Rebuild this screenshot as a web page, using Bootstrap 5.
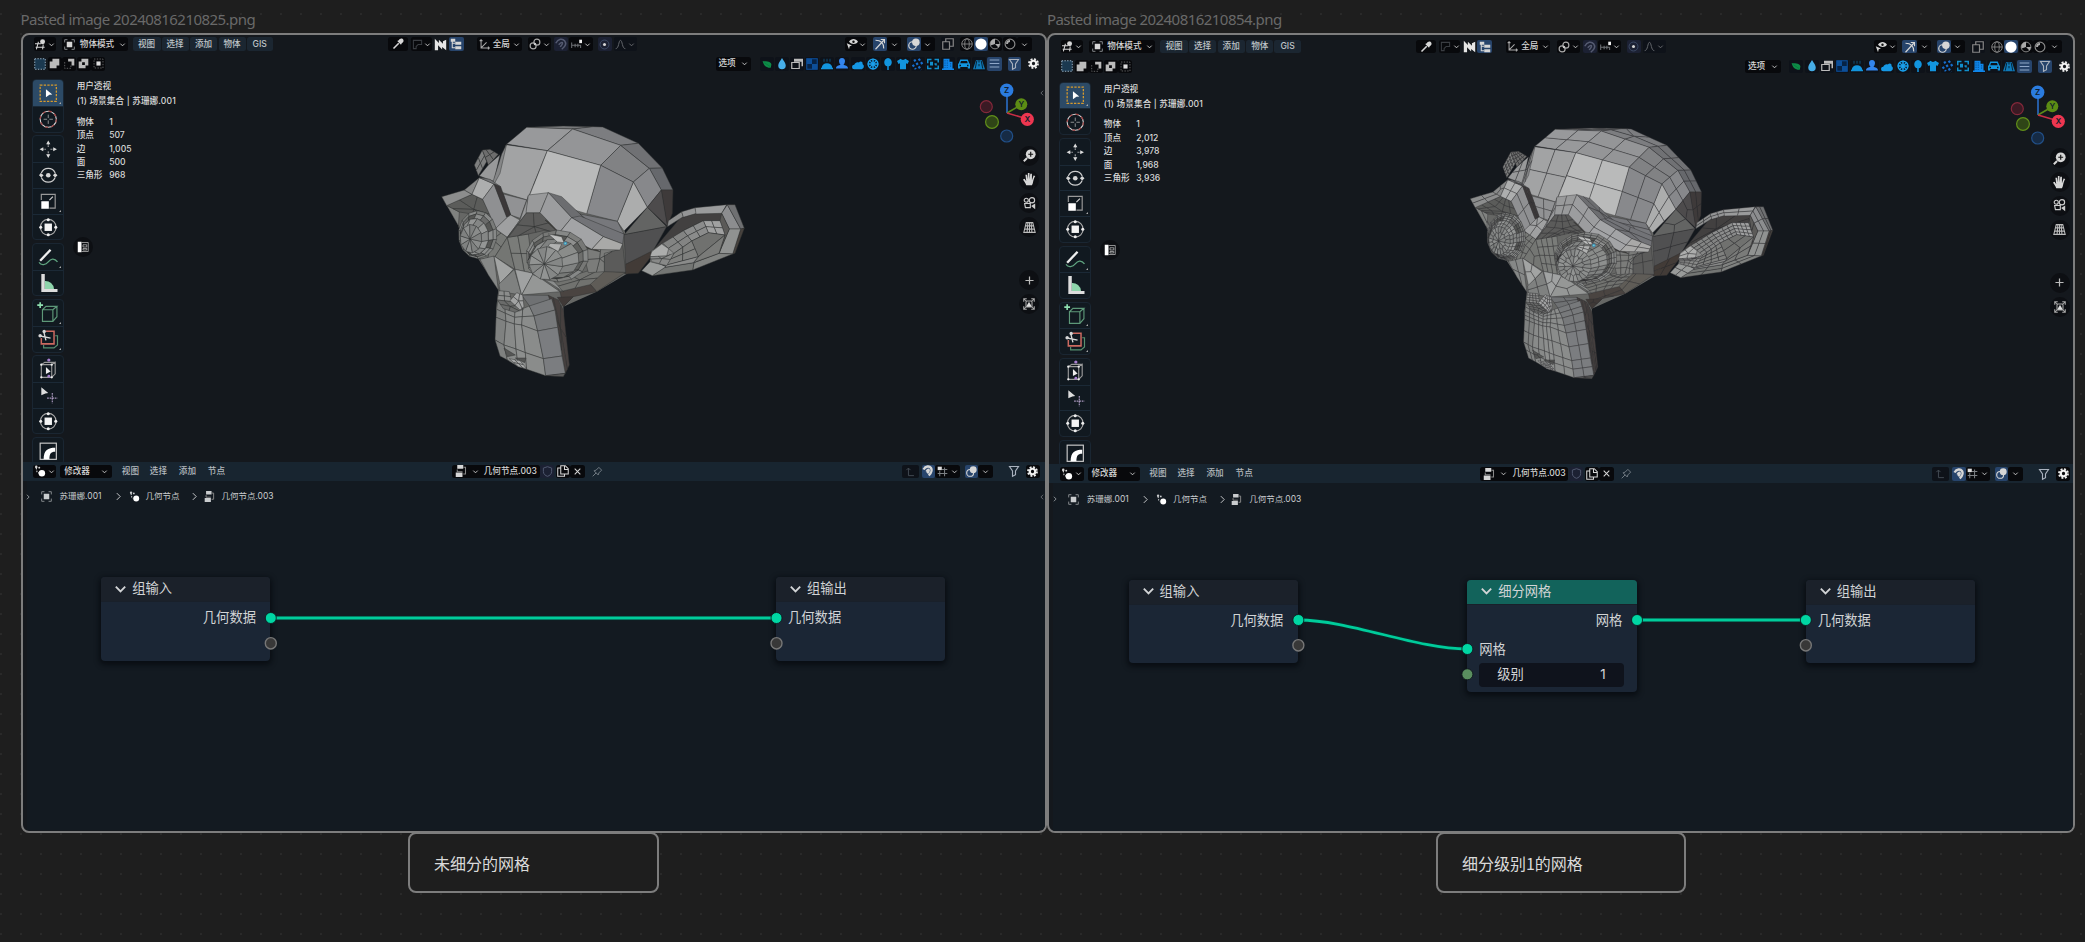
<!DOCTYPE html>
<html lang="en">
<head>
<meta charset="utf-8">
<title>Canvas</title>
<link href="https://cdn.jsdelivr.net/npm/bootstrap@5.3.0/dist/css/bootstrap.min.css" rel="stylesheet">
<style>
html,body{height:100%;overflow:hidden}
body{background-color:#1e1e1e;font-family:Inter,"Noto Sans CJK SC",sans-serif;color:#d6d6d6;
 background-image:radial-gradient(circle,#2a2a2a 0,#292929 1px,transparent 1.4px);background-size:20px 20px;background-position:-9px 4px}
.board{padding:10px 0 0 20.5px;gap:.4px}
.fname{font:15px/18px "Noto Sans",sans-serif;color:#696969;height:23px;white-space:nowrap;letter-spacing:-.54px}
.shot{border:2px solid #7d7d7d;border-radius:8px;height:800px;background:#14181d;overflow:hidden;position:relative}
.note{border:2px solid #7d7d7d;border-radius:8px;width:250.5px;height:61px;margin-top:-1px;padding:0 24.5px 0 24px;background:#1e1e1e;font:16px/1 "Noto Sans CJK SC",sans-serif;color:#dadada}
.ln{fill:none}
.ln:not([stroke]){stroke:currentColor}
.bar{height:18px;white-space:nowrap;font-size:8.6px;font-weight:500;line-height:13px}
.bar2{height:21.5px}
.seg{height:13.5px;display:flex;align-items:center;justify-content:space-around;flex:none;overflow:visible}
.k{background:#08090c;border-radius:2.5px}
.m{background:#1b2631;border-radius:2.5px;color:#bfc4c8}
.b{background:#27446b;border-radius:2px}
.p{background:#1c2133;border-radius:2px}
.d{background:#0e1219;border-radius:2px}
.tx{color:#b4babe}
.seg svg,.cell svg,.rnd svg{display:block;flex:none}
.view{height:387.2px;position:relative}
.tools{width:31.7px;margin-top:4.8px;gap:2.8px}
.grp{border:1px solid #1a2632;border-radius:4px;background:#111920;overflow:hidden;flex:none}
.cell{height:25.7px;display:flex;align-items:center;justify-content:center;position:relative}
.cell+.cell{border-top:1px solid #1b2936}
.cell.on{background:#2c4a66}
.cell.sub::after{content:"";position:absolute;right:2px;bottom:2px;border:1.5px solid #aaa;border-left-color:transparent;border-top-color:transparent}
.stats{font-size:8.6px;font-weight:500;line-height:13.35px;color:#dadada;margin:5.5px 0 0 12.7px;white-space:nowrap}
.stats .scene{margin:1.8px 0 7.5px;letter-spacing:.12px}
.stats .lab{width:32.5px;display:inline-block}
.rnd{width:20px;height:20px;border-radius:50%;background:#0d0f13;display:flex;align-items:center;justify-content:center;position:absolute}
.over{position:absolute}
.tab{right:0;color:#6b6f74}
.nbar{height:19.3px;background:#182530}
.crumb{height:32px;font-weight:400;color:#c9ccce;font-size:8.5px}
.ned{background:#131a21}
.free{position:relative;height:317px}
.gnode{position:absolute;border-radius:4px;background:#1b2635;box-shadow:0 2px 5px 2px rgba(5,8,12,.65);font-size:13.3px;color:#d2d4d6;white-space:nowrap}
.gnode .hd{height:24.8px;background:#1b212a;border-radius:4px 4px 0 0;padding:0 0 2px 12px;gap:4px;line-height:22px;border-bottom:1px solid #19202a}
.gnode .hd.geo{background:#12635b}
.gnode .rw{height:29.6px;line-height:30px;padding:0 14.5px 0 12px}
.fld{margin:-.5px 13px 0 12px;height:23.5px;background:#0f131c;border-radius:4px;line-height:22px;padding:0 18px}
</style>
<script src="https://cdn.jsdelivr.net/npm/bootstrap@5.3.0/dist/js/bootstrap.bundle.min.js"></script>
</head>
<body>
<main class="board d-flex align-items-start" id="board"></main>
<script>
// 16x16 icon drawings
const S='class="ln"';
const I={
chev:`<path ${S} stroke-width="2" d="M3 6l5 5 5-5"/>`,
right:`<path ${S} stroke-width="1.7" d="M5 2l6 6-6 6"/>`,
left:`<path ${S} stroke-width="2.4" d="M11 2L5 8l6 6"/>`,
ed3d:`<path ${S} stroke-width="1.5" d="M0 7h9M1 12h13M5 4L2 15M12 8l-1 7"/><circle cx="11" cy="4" r="3.6" fill="currentColor"/>`,
obj:`<rect x="4" y="4" width="8" height="8" fill="currentColor"/><path ${S} stroke="#8f9295" stroke-width="1.3" d="M1 5V1h4M11 1h4v4M15 11v4h-4M5 15H1v-4"/>`,
drop:`<path ${S} stroke-width="2.2" d="M2 14l7-7"/><path fill="currentColor" d="M7 4l5 5 1-2c3-1 3-5 1-6s-4 0-5 2z"/>`,
sq:`<path ${S} stroke="#3a3d42" stroke-width="1.5" d="M14 2H2v12h4v-3l3-3h5z"/>`,
nn:`<path fill="#e6e6e6" d="M1 1l5 5V2l5 5V4l4-2v13l-5-4v3L5 9v6H1z"/>`,
tree:`<path ${S} stroke-width="1.4" d="M3 4v9h4M3 7h4"/><path fill="currentColor" d="M1 1h6v4H1zM7 5h8v4H7zM7 11h8v4H7z"/>`,
axes:`<path ${S} stroke="#aaa" stroke-width="1.5" d="M3 1v12h12M3 13l8-8M1 3l2-2 2 2M13 11l2 2-2 2"/>`,
link:`<circle cx="5.5" cy="10.5" r="4" ${S} stroke="#aaa" stroke-width="1.6"/><circle cx="10.5" cy="5.5" r="4" ${S} stroke="#aaa" stroke-width="1.6"/><circle cx="8" cy="8" r="1.3" fill="currentColor"/>`,
mag:`<path ${S} stroke-width="3.2" d="M2 6c3-5 8-5 10-2s1 6-3 10M6 9c2-3 3-3 3-2s0 2-2 4"/>`,
magd:`<path ${S} stroke="#545a70" stroke-width="2" d="M1 7c3-6 9-7 12-3s0 8-4 11M5 9c2-3 5-4 5-2s-2 3-3 5"/>`,
incr:`<path ${S} stroke="#6f7276" stroke-width="1.5" d="M1 5v8M1 9h13M6 7v5M10 7v5M14 9v4"/><rect x="12" y="1" width="4" height="5" fill="#eee"/>`,
prop:`<circle cx="8" cy="8" r="6.5" ${S} stroke="#3c4a66" stroke-width="1.4"/><circle cx="8" cy="8" r="2.2" fill="currentColor"/>`,
curve:`<path ${S} stroke="#64676c" stroke-width="1.4" d="M1 14C6 14 5 2 8 2s2 12 7 12"/>`,
eye:`<path fill="currentColor" d="M4 5c3-5 9-5 12 0-3 4-8 4-12 0zM1 7l7 3-3 1-1 4z"/><circle cx="10" cy="5" r="1.6" fill="#111"/>`,
giz:`<path ${S} stroke-width="1.5" d="M2 3c7 0 11 4 11 11M2 15L13 3M9 2h5v5"/>`,
ovl:`<circle cx="6" cy="10" r="5" ${S} stroke-width="1.6"/><circle cx="10.5" cy="5.5" r="5" fill="currentColor"/>`,
xray:`<path ${S} stroke="#888" stroke-width="1.6" d="M1 5h9v10H1zM5 5V1h10v10h-5"/>`,
wire:`<g ${S} stroke="#888" stroke-width="1.2"><circle cx="8" cy="8" r="7"/><ellipse cx="8" cy="8" rx="3" ry="7"/><path d="M1 8h14"/></g>`,
ball:`<circle cx="8" cy="8" r="7.5" fill="#fff"/>`,
mat:`<circle cx="8" cy="8" r="6.5" ${S} stroke="#888" stroke-width="1.3"/><path fill="#aaa" d="M8 1a7 7 0 00-6 9l6-2zM8 8l5 5A7 7 0 0115 8z"/>`,
rend:`<circle cx="8" cy="8" r="6.5" ${S} stroke="#888" stroke-width="1.6"/><path ${S} stroke="#aaa" stroke-width="2.5" d="M4 8a4 4 0 014-4"/>`,
sel0:`<rect x="1" y="1" width="14" height="14" fill="#1b3950" stroke="#9ab4c8" stroke-width="1.3" stroke-dasharray="1.8 1.8"/>`,
sel1:`<path fill="#bbb" d="M5 1h10v10h-4v4H1V5h4z"/>`,
sel2:`<path fill="#bbb" d="M6 1h9v10h-4V5H6z"/><path ${S} stroke="#888" stroke-dasharray="2 2" d="M1 6v9h9v-4"/>`,
sel3:`<path fill="#bbb" fill-rule="evenodd" d="M5 1h10v10h-4v4H1V5h4zM6 6v4h4V6z"/>`,
sel4:`<rect x="1.5" y="1.5" width="13" height="13" ${S} stroke="#888" stroke-dasharray="2 2"/><rect x="5" y="5" width="6" height="6" fill="#ddd"/>`,
leaf:`<path fill="#0e8a48" d="M1 3c4 1 12-1 14 5 0 3-1 5-1 6-4 0-11-1-13-11z"/><path stroke="#073" d="M4 6l9 6"/>`,
water:`<path fill="#46aee8" d="M8 0c3 5 5 7 5 10a5 5 0 01-10 0c0-3 2-5 5-10z"/>`,
win:`<path fill="#bbb" d="M4 1h12v10h-2V5H4z"/><path ${S} stroke="#bbb" stroke-width="1.6" d="M1 6h10v8H1z"/>`,
chk:`<rect x="1" y="1" width="14" height="14" fill="#062346" stroke="#0c4f9c" stroke-width="1.4"/><path fill="#0d4f99" d="M1 1h7v7H1zM8 8h7v7H8z"/>`,
dome:`<path fill="#1294dd" d="M1 13a7 6 0 0114 0zM0 13h16v2H0z"/><path ${S} stroke="#0f4f78" stroke-width="1.3" d="M4 1v4M8 1v4M12 1v4"/>`,
man:`<path fill="#3385ee" d="M8 0c3 0 4 2 4 4s-1 4-2 5c2 1 6 1 6 5H0c0-4 4-4 6-5C5 8 4 6 4 4s1-4 4-4z"/>`,
cloud:`<path fill="#1597e4" d="M3 15a3 3 0 010-6c1-3 4-4 6-3 3-3 6 0 5 2 3 2 2 6-1 7z"/>`,
reel:`<circle cx="8" cy="8" r="6.6" fill="#0b2338" stroke="#1aa0ec" stroke-width="1.8"/><g fill="#1aa0ec"><circle cx="8" cy="8" r="1.6"/><path d="M7 1h2v14H7zM1 7h14v2H1zM3 4l1-1 9 9-1 1zM12 3l1 1-9 9-1-1z"/></g>`,
tree2:`<path fill="#1295df" d="M8 0a5.500 5.500 0 015 6c0 3-2 5-4 5v5H7v-5c-2 0-4-2-4-5a5.500 5.500 0 015-6z"/>`,
shirt:`<path fill="#1295df" d="M5 1c1 2 5 2 6 0l5 3-2 4-2-1v8H4V7L2 8 0 4z"/>`,
spray:`<path ${S} stroke="#166fd0" stroke-width="3" stroke-dasharray="3 2.5" d="M3 2l9 14M9 1l6 9M1 9l4 6"/>`,
cyc:`<path ${S} stroke="#118fcc" stroke-width="2" d="M1 7V2h5M10 2h5v4M15 10v4h-5M6 14H1v-4M5 6h2v3H5zM10 8h2v2"/>`,
bld:`<path fill="#0f86ea" d="M2 1h8v4h4v9h2v2H0v-2h2z"/><path stroke="#063a70" stroke-dasharray="1.500 1.500" d="M4 3v10M7 3v10M11.500 7v6"/>`,
car:`<path fill="#1295df" fill-rule="evenodd" d="M3 2h10l2 5 1 1v6h-3v-2H3v2H0V8l1-1zM4 4L3 7h10l-1-3zM2 9v2h2V9zM12 9v2h2V9z"/>`,
road:`<path fill="#0f7ab8" d="M4 3h8l4 12H0z"/><path stroke="#07263b" stroke-width="1.400" d="M8 3v3M8 8v3M5 4L3 14M11 4l2 10"/>`,
list:`<path stroke="#8fa7c8" stroke-width="1.600" d="M1 3h14M1 8h14M1 13h14"/>`,
filt:`<path ${S} stroke="#aab2be" stroke-width="1.500" d="M2 2h12L10 8v5l-4 2V8z"/>`,
gear:`<circle cx="8" cy="8" r="4" ${S} stroke="#f0f0f0" stroke-width="3.200"/><circle cx="8" cy="8" r="6.600" ${S} stroke="#f0f0f0" stroke-width="2.500" stroke-dasharray="2.900 2.280"/>`,
geo:`<circle cx="10.500" cy="11" r="4.300" fill="#fff"/><circle cx="3" cy="2.500" r="1.700" fill="currentColor"/><circle cx="7" cy="3.500" r="1.300" fill="currentColor"/><path ${S} stroke-width="1.500" stroke-dasharray="2 1.500" d="M3 4l1 5 3 2"/>`,
tre3:`<path fill="currentColor" d="M3 0h8v5H3zM1 10h9v6H1z"/><path ${S} stroke="#888" stroke-width="1.400" d="M3 6v3h7M11 3h3v9h-3"/>`,
shld:`<path ${S} stroke="#515970" stroke-width="1.400" d="M8 1l6 2v5c0 4-3 6-6 7-3-1-6-3-6-7V3z"/>`,
copy:`<path ${S} stroke-width="1.400" d="M5 1h6l4 4v7H5zM5 4H1v11h9v-3M10 1v5h5"/>`,
x:`<path ${S} stroke-width="1.800" d="M3 3l10 10M13 3L3 13"/>`,
pin:`<path ${S} stroke="#7c858c" stroke-width="1.300" d="M1 15l5-5M3 7l6 6 1-3 4-4-4-4-4 4z"/>`,
up:`<path ${S} stroke="#434b53" stroke-width="1.400" d="M5 3v11h8M2 6l3-3 3 3"/>`,
grid:`<path ${S} stroke="#7c8084" stroke-width="1.500" d="M4 7v8M11 2v13M1 11h14M7 5h8"/><path fill="#ddd" d="M1 1h6v5H1z"/>`,
// toolbar
tsel:`<rect x="1" y="1" width="14" height="14" ${S} stroke="#d69a2d" stroke-width="1.100" stroke-dasharray="2 1.100"/><path fill="#fff" d="M6 4.500l5.500 4.500-2.500.4L6 11.500z"/>`,
tcur:`<circle cx="8" cy="8" r="7" ${S} stroke="#d8d8d8" stroke-width=".9"/><circle cx="8" cy="8" r="7" ${S} stroke="#a04040" stroke-width="1" stroke-dasharray="2.750"/><path ${S} stroke="#aaa" stroke-width=".7" d="M8 4v3M8 9v3M4 8h3M9 8h3"/>`,
tmov:`<path fill="#ddd" d="M8 .5l1.800 3.200H6.200zM8 15.500l1.800-3.200H6.200zM.5 8l3.200-1.800v3.600zM15.500 8l-3.200-1.800v3.600z"/><path stroke="#ccc" stroke-dasharray="1 .8" d="M8 3v3M8 10v3M3 8h3M10 8h3"/>`,
trot:`<path ${S} stroke="#ccc" stroke-width="1" d="M2 6a6.500 6.500 0 0112 0M2 10a6.500 6.500 0 0012 0"/><circle cx="8" cy="8" r="2" fill="currentColor"/><path fill="currentColor" d="M0 8l1.500-2L4 8l-2 2zM12 8l2-2 2 2-2 2z"/>`,
tscl:`<path ${S} stroke="#999" stroke-width="1" d="M2 7V2h12v12H9"/><rect x="2" y="8" width="6.500" height="6.500" fill="#fff"/><path ${S} d="M9 7l3-3"/>`,
ttrf:`<circle cx="8" cy="8" r="6.800" ${S} stroke="#aaa" stroke-width="1"/><rect x="4.800" y="4.800" width="6.400" height="6.400" fill="#f4f4f4"/><g fill="#eee"><circle cx="8" cy="1.500" r="1.300"/><circle cx="8" cy="14.500" r="1.300"/><circle cx="1.500" cy="8" r="1.300"/><circle cx="14.500" cy="8" r="1.300"/></g>`,
tann:`<path ${S} stroke="#eee" stroke-width="2" d="M1 11L10 1.500"/><path ${S} stroke="#5fa37f" stroke-width="1.100" d="M0 12.500c2 3 6 2 8-.500s5-4 8 0"/>`,
tmea:`<path fill="#8ed4ab" d="M5 6a7.500 7.500 0 018 7H5z"/><path fill="#ddd" d="M2 0h3v13h11v2.500H2z"/>`,
tadd:`<path ${S} stroke="#5d9878" stroke-width="1" d="M3 5h9v10H3zM3 5l3-3h9.500l-3.500 3M15.500 2v9l-3.500 4"/><path stroke="#8fe0b0" stroke-width="1.400" d="M1 -1.500v5M-1.500 1h5"/>`,
tcut:`<path ${S} stroke="#569070" d="M14 5h2v8l-3 2.500H4V13"/><path ${S} stroke="#cc6a60" stroke-width="1.300" d="M6 1h7v11H2V7"/><path ${S} stroke-width="1.200" d="M0 5l10 2M6 9L4 1"/><circle cx="1" cy="5" r="1.500" fill="currentColor"/><circle cx="4.500" cy="1.300" r="1.500" fill="currentColor"/>`,
tcag:`<path ${S} stroke="#999" d="M2 4h9v11H2zM11 4l3-2v10l-3 3M2 4l3-2h9"/><g fill="#eee"><circle cx="2" cy="4" r="1"/><circle cx="11" cy="4" r="1"/><circle cx="2" cy="15" r="1"/><circle cx="11" cy="15" r="1"/><path d="M6 6l4 4-4 2z"/></g><circle cx="8.500" cy="0" r="1.400" fill="#a880d0"/><circle cx="8.500" cy="14" r="1.200" fill="#a880d0"/>`,
tcm:`<path fill="#ddd" d="M2 1l6 5-2.500.500L2 8z"/><path stroke="#a997bd" stroke-width="1" stroke-dasharray="1.500 .700" d="M11.500 6v9M7 10.500h9"/>`,
tbev:`<rect x="1" y="1" width="14" height="14" ${S} stroke="#ccc" stroke-width="1"/><path fill="#fff" d="M4 15c0-8 4-10 10-10v3.500c-4 0-5 2-5 6.500z"/>`,
zoom:`<circle cx="9.500" cy="6.500" r="6" fill="currentColor"/><path stroke="#111" stroke-width="1.400" d="M9.500 3.500v6M6.500 6.500h6"/><path ${S} stroke-width="2.400" d="M5 11l-4 4"/>`,
hand:`<path fill="currentColor" d="M4 15C3 12 1 10 0 8l2-1 2 3-1-8h2l1 6V0h2v8l1-7h2l0 8 2-6 2 .600C12 9 13 12 11 15z"/>`,
cam:`<g ${S} stroke="#ccc" stroke-width="1.400"><circle cx="4" cy="4" r="2.500"/><circle cx="11" cy="4" r="3.300"/><path d="M2 8h7v5H3z"/></g><path fill="#ccc" d="M10 11l5-3v7z"/>`,
persp:`<path ${S} stroke="#bbb" stroke-width="1.300" d="M4 2h8l3 12H1zM3 6h10M2 10h12M8 2v12M6 2L5 14M10 2l1 12"/>`,
plus:`<path stroke="#bbb" stroke-width="1.500" d="M8 3v10M3 8h10"/>`,
frame:`<path fill="#ddd" d="M4 12l4-7 4 7z"/><path ${S} stroke="#aaa" stroke-width="1.400" d="M1 1l4 4M15 1l-4 4M1 15l4-4M15 15l-4-4M1 5V1h4M11 1h4v4M15 11v4h-4M5 15H1v-4M4 4h8v8H4z"/>`,
panel:`<path fill="#fff" d="M1 1h5v14H1z"/><path ${S} stroke="#bbb" d="M6 2h9v12H6M8 5h5v3H8zM8 10h5v2H8z"/>`
};
const ic=(n,s=11)=>`<svg width="${s}" height="${s}" viewBox="0 0 16 16" overflow="visible">${I[n]}</svg>`;
const C=ic('chev',7);

// Suzanne: faces as [fill, points, base subdivision level]
const F=[];
const f=(c,s,l=0)=>{const n=s.split(/[ ,]+/).map(Number),p=[];for(let i=0;i<n.length;i+=2)p.push([n[i],n[i+1]]);F.push([c,p,l])};
f('#7e7f7f','163,165 187,120 200,155 175,197',1); f('#6d6d6d','187,120 210,118 235,133 205,165',1);
f('#98999a','205,165 240,134 222,214 178,198');
f('#77787a','320,52 430,48 520,50 458,57'); f('#7c7d80','458,57 520,50 548,51 655,100 602,106');
f('#98999b','260,102 320,52 458,57 382,122'); f('#949597','382,122 458,57 602,106 542,166');
f('#818284','542,166 602,106 688,175 640,216'); f('#707174','602,106 655,100 727,174 688,175');
f('#66686c','688,175 727,174 759,240 724,240'); f('#87888b','640,216 688,175 724,240 682,292');
f('#acadad','640,216 682,292 612,363 592,334'); f('#88898c','542,166 640,216 592,334 500,311');
f('#a2a3a4','258,104 382,122 322,270 215,238'); f('#b9baba','382,122 542,166 500,311 327,260');
f('#858687','245,132 260,102 240,190 218,230 220,212'); f('#919294','250,252 320,270 300,325 272,315');
f('#3e3a3a','724,240 759,240 757,310 742,348'); f('#4d4b4c','724,240 742,348 682,292');
f('#636463','682,292 740,350 612,374'); f('#505051','612,374 740,350 695,430 617,463');
f('#423b37','617,463 712,415 655,490 614,492');
// near-side face
f('#5f5c57','512,480 617,487 530,545 510,522'); f('#4a4441','420,545 510,522 530,545 460,560 430,590');
f('#71726f','400,515 512,480 553,485 510,524 420,545',1); f('#5b5b5a','553,430 608,402 617,487 553,485');
f('#7b7c7a','485,410 600,418 553,430 553,485 505,488',1);
f('#808280','80,286 118,306 115,350 145,395 180,448 150,408');
f('#5b5c5a','80,286 156,253 188,268 232,358 195,318 118,306',1);
f('#777976','195,318 225,356 262,382 225,440 180,448',1); f('#747673','262,382 225,440 285,478');
f('#7a7c79','262,382 325,372 340,490 285,478',1); f('#868887','180,448 222,438 235,540 205,495');
f('#a2a4a3','222,438 280,478 240,522'); f('#7f8180','283,478 305,555 240,545 237,522');
f('#a0a2a2','285,478 340,490 305,555'); f('#959796','340,490 420,545 305,555'); f('#8b8d8c','340,488 400,512 430,545');
// brows
f('#8c8d8d','65,260 133,240 156,253 80,287'); f('#888989','133,240 178,203 156,253');
f('#adaeae','178,203 222,222 188,268 156,253'); f('#757678','178,203 210,208 242,230 222,222');
f('#8f9092','222,222 262,322 228,356 188,268'); f('#3b3839','222,222 242,230 272,314 260,322');
f('#9fa0a1','262,322 272,315 300,330 262,382 226,356'); f('#969798','300,330 325,258 320,308 262,382');
f('#5b5b5a','320,308 360,308 418,368 370,362 325,372 265,382',1);
f('#3e3d39','375,330 440,360 540,425 485,412 440,392');
f('#999a9b','325,255 385,248 360,308 318,308'); f('#6c6d70','385,248 425,260 480,312 520,352 455,323');
f('#9c9d9f','385,248 455,323 418,368 360,308'); f('#77787c','480,312 592,334 612,372 520,346');
f('#727377','480,318 612,372 608,402 550,380 455,323'); f('#a3a4a6','455,323 550,380 515,418 418,368');
f('#a9a9a8','550,380 608,402 600,420 515,418');
// eyes: concentric rings of quads
function ring(n,a,b,cols,l){for(let i=0;i<n;i++){const P=(e,k)=>{const t=2*Math.PI*k/n+.2;return[e[0]+e[2]*Math.cos(t),e[1]+e[3]*Math.sin(t)]};
 F.push([cols[i%cols.length],b[2]?[P(a,i),P(a,i+1),P(b,i+1),P(b,i)]:[P(a,i),P(a,i+1),[b[0],b[1]]],l||0])}}
ring(14,[412,438,94,78],[408,440,83,66],['#777876','#868887','#7d7e7c']);
ring(14,[408,440,83,66],[402,446,74,58],['#5e5f5d','#6d6e6c','#555654','#8e8f8e']);
ring(12,[405,446,73,60],[375,460,52,46],['#808281','#777977','#8a8c8a','#8d8f8e']);
ring(11,[378,460,51,50],[373,462,0,0],['#8c8e8d','#858786','#929493']);
f('#bcbdbc','385,372 425,380 432,398 412,396'); f('#b0b1b0','390,400 425,402 415,425 385,408');
ring(14,[173,374,58,72],[170,376,50,64],['#797b79','#878988']);
ring(14,[170,376,50,64],[164,380,42,55],['#555654','#8b8d8c','#6a6b6a']);
ring(12,[164,380,42,55],[153,386,32,42],['#949695','#848685']);
ring(10,[153,386,33,43],[150,387,0,0],['#8a8c8b','#7f8180']);
// muzzle
f('#6f7173','305,555 385,556 395,568 330,590'); f('#46403f','385,556 415,570 430,600 448,765 436,790 413,652',1);
f('#3f3937','412,562 460,560 430,590');
const R=[[[233,572],[255,590],[285,605],[308,596],[328,588],[395,566]],[[230,598],[256,610],[284,622],[307,620],[342,618],[405,600]],
[[228,622],[258,634],[283,642],[305,645],[353,663],[413,652]],[[225,690],[252,705],[288,717],[316,728],[370,746],[426,738]],[[240,738],[262,750],[295,770],[320,778],[377,797],[436,790]]];
for(let r=0;r<4;r++)for(let c=0;c<5;c++)F.push([c==4?(r<2?'#77797b':'#7b7d80'):c==3?'#8a8c8b':['#7f8180','#888a89','#8d8f8e'][c],[R[r][c],R[r][c+1],R[r+1][c+1],R[r+1][c]],0]);
f('#5b5b5b','377,797 436,790 430,800'); f('#555655','252,714 286,735 262,740'); f('#555655','286,744 318,744 314,758');
f('#a5a6a6','268,746 300,752 320,776 295,770',1);
f('#8b8c8b','237,542 268,545 275,575 232,570',1); f('#6a6b6a','232,570 275,575 310,598 285,607 250,596',1); f('#a2a3a3','270,572 290,548 308,555 312,590 300,600',1);
// near ear
f('#424040','742,370 780,325 828,308 905,306 905,332 850,332 790,362 728,404 700,420');
f('#8d8e8e','742,350 745,332 785,305 790,320'); f('#949596','785,305 825,293 830,310 790,322'); f('#9a9b9c','825,293 920,284 905,310 828,312');
f('#8c8d8f','905,310 922,284 962,357 928,357'); f('#6f7072','922,284 945,284 973,355 962,357'); f('#47423e','962,357 973,355 945,430 938,433');
f('#909291','928,357 962,357 938,432 897,430'); f('#808280','897,430 938,432 818,480 822,458'); f('#747674','818,480 822,458 735,472 697,497');
f('#999b9a','665,482 695,450 738,470 697,497');
f('#5b5a58','905,310 928,357 897,430 915,375 900,332');
f('#8e8f8e','695,422 728,400 765,428 740,468 690,455');
f('#a0a1a1','850,332 900,332 915,375 865,368',1); f('#8b8c8c','790,362 850,332 865,368 815,393',1); f('#838483','728,400 790,362 815,393 762,430',1);
f('#70716f','815,393 865,368 915,375 835,440'); f('#7a7b79','915,375 897,430 820,458 835,440'); f('#7f807e','762,430 815,393 835,440 740,465',1); f('#8a8b8a','740,465 835,440 820,458 735,472');
f('#acadac','695,425 725,402 746,416 740,438 690,440'); f('#888988','690,440 740,438 762,430 740,467 695,455',1);
// midpoint subdivision of a polygon
function sub(p,l){if(!l)return[p];const n=p.length,c=[p.reduce((s,v)=>s+v[0],0)/n,p.reduce((s,v)=>s+v[1],0)/n],m=p.map((v,i)=>{const w=p[(i+1)%n];return[(v[0]+w[0])/2,(v[1]+w[1])/2]});
 return p.flatMap((v,i)=>sub([v,m[i],c,m[(i+n-1)%n]],l-1))}
const pts=p=>p.map(v=>v.map(q=>q.toFixed(1)).join()).join(' ');
function monkey(x,l){let o='';for(const[c,p,b]of F){o+=`<g fill="${c}">`;for(const q of sub(p,b+l))o+=`<polygon points="${pts(q)}"/>`;o+='</g>'}
 return `<svg class="over" style="left:${x}px;top:35px" width="${l?341:340}" height="280" viewBox="0 0 1020 840"><polygon fill="#666765" points="80,286 178,203 250,200 600,300 640,480 530,545 430,590 440,780 377,797 240,738 228,600 235,540 150,408"/><g stroke="#2e2f30" stroke-opacity="${l?.66:.7}" stroke-width="${l?1.8:1.9}" stroke-linejoin="round">${o}</g><circle cx="436" cy="400" r="4" fill="#7cc" stroke="#368ab8" stroke-width="3"/></svg>`}

const menu=t=>`<span>${t}</span>`;
// each strip item: [left, right, style, content]
const top1=[[34,55.5,'k',ic('ed3d')+C],[62,128,'k',ic('obj')+menu('物体模式')+C],[132.5,160.5,'m','视图'],[161.5,188.5,'m','选择'],[190,217,'m','添加'],[218.5,245.5,'m','物体'],[246.5,273,'m','GIS'],
[388,408,'k',ic('drop',12)],[411,432,'k',ic('sq')+C],[433.5,448,'',ic('nn',13)],[448.5,463.7,'b',ic('tree',12)],[477,521.6,'k',ic('axes')+menu('全局')+C],[528.5,551,'k',ic('link',12)+C],[554,568.5,'p',ic('magd',12)],[569.5,592.6,'k',ic('incr')+C],[598,612,'p',ic('prop')],[614,636.7,'d',ic('curve')+'<span class="opacity-50">'+C+'</span>'],
[844.7,867.3,'k',ic('eye',12)+C],[872.7,886.7,'b',ic('giz',12)],[887.3,901,'k',C],[906.7,920.7,'b',ic('ovl',12)],[921,935,'k',C],[941,954.5,'d',ic('xray',12)],[960,974,'k',ic('wire',12)],[974.3,987.7,'b',ic('ball',12)],[988.5,1002.5,'k',ic('mat',12)],[1003,1017,'k',ic('rend',12)],[1017,1032,'k',C]];
const top2=[[33.5,47,'',ic('sel0',12)],[47.5,61.5,'k',ic('sel1')],[62,76,'k',ic('sel2')],[76.5,90.5,'k',ic('sel3')],[91,105,'k',ic('sel4')],[715.7,751,'k',menu('选项')+C],
...['leaf','water','win','chk','dome','man','cloud','reel','tree2','shirt','spray','cyc','bld','car','road'].map((n,i)=>[759.7+i*15.15,773.7+i*15.15,'d',ic(n,n=='leaf'?10:12)]),
[987,1002,'b',ic('list')],[1007.7,1021.3,'b',ic('filt',12)],[1027,1040.5,'',ic('gear')]];
const nodeTop=[[32.7,56.3,'k',ic('geo',12)+C],[60.4,112.2,'k','<span class="me-1">修改器</span>'+C],[117,144,'tx','视图'],[145,172,'tx','选择'],[174,201,'tx','添加'],[203,230,'tx','节点'],
[452,539.6,'k',ic('tre3',12)+C+menu('几何节点.003')],[540.5,554,'p',ic('shld')],[556,570,'k',ic('copy',12)],[570,585,'k',ic('x',9)],[590,605,'',ic('pin')],[902.4,918.8,'d',ic('up')],[921.6,935.5,'b',ic('mag',12)],[935.5,959.6,'k',ic('grid')+C],[965,978,'b',ic('ovl',11)],[978,993,'k',C],[1007,1021,'',ic('filt',12)],[1026,1040,'k',ic('gear')]];
const crumbs=[[25,31,'',ic('right',6)],[40,52,'',ic('obj')],[58,103,'','苏珊娜.001'],[114,122,'',ic('right',9)],[128,140,'',ic('geo')],[145,180,'','几何节点'],[190,198,'',ic('right',9)],[203,215,'',ic('tre3')],[220,275,'','几何节点.003']];
const tools=[[['tsel','on sub'],['tcur','']],[['tmov',''],['trot',''],['tscl','sub'],['ttrf','']],[['tann','sub'],['tmea','']],[['tadd','sub'],['tcut','sub']],[['tcag',''],['tcm',''],['ttrf','']],[['tbev','']]];

function shot(o){
 const X=x=>(x-22.5)*o.k+o.dx;
 const strip=(items,cls)=>{let e=0;return `<div class="d-flex align-items-center ${cls}">`+items.map(([a,b,c,h])=>{const l=X(a),r=X(b),s=`<div class="seg ${c}" style="margin-left:${(l-e).toFixed(2)}px;width:${(r-l).toFixed(2)}px">${h}</div>`;e=r;return s}).join('')+'</div>'};
 const rnd=(x,y,n,s=13)=>`<div class="rnd" style="left:${X(x)-10}px;top:${y-84.5}px">${ic(n,s)}</div>`;
 const gx=X(1007)-30;
 const axis=`<svg class="over" style="left:${gx}px;top:5px" width="60" height="66" viewBox="977 80 60 66" font-size="8" font-weight="600" text-anchor="middle"><g stroke-width="1.600"><path stroke="#2a6fc8" d="M1007 113V92"/><path stroke="#5b8a18" d="M1007 113l12-7"/><path stroke="#c92e46" d="M1007 113l17 5"/></g><g stroke-width="1.200"><circle cx="986.300" cy="106.700" r="6" fill="#3b1a24" stroke="#84283a"/><circle cx="992" cy="122" r="6.400" fill="#2f4517" stroke="#618f1a"/><circle cx="1006.700" cy="136" r="6" fill="#162b45" stroke="#214f87"/></g><circle cx="1006.700" cy="90.300" r="6.700" fill="#2b7ce0"/><circle cx="1021.300" cy="104.300" r="6" fill="#5c8c14"/><circle cx="1027.300" cy="119.300" r="6.600" fill="#ee3650"/><g fill="#10202c"><text x="1006.700" y="93.300">Z</text><text x="1021.300" y="107.300">Y</text><text x="1027.300" y="122.300">X</text></g></svg>`;
 const node=(x,y,w,h,t,geo,body)=>`<section class="gnode" style="left:${X(x)-4}px;top:${y}px;width:${w}px;height:${h}px"><div class="hd d-flex align-items-center ${geo}">${ic('chev',15)}<span>${t}</span></div>${body}</section>`;
 const sock=(x,y,c)=>{const q=X(x)-4;return c=='g'?`<ellipse cx="${q}" cy="${y}" rx="5.500" ry="5.700" fill="#383838" stroke="#777" stroke-width="1.400"/>`:`<circle cx="${q}" cy="${y}" r="5.500" fill="${c}" stroke="#0b1218" stroke-width=".8"/>`};
 const L=x=>X(x)-4,G='#00d6a3',y0=105;
 const wire=d=>`<path d="${d}" fill="none" stroke="#0a2a2a" stroke-width="4.500"/><path d="${d}" fill="none" stroke="#00cc9b" stroke-width="2.800"/>`;
 const nin=node(101.2,64.5,169.3,83.5,'组输入','','<div class="rw text-end">几何数据</div>');
 const nout=node(776,64.5,169.3,83.5,'组输出','','<div class="rw">几何数据</div>');
 let mid='',w;
 if(o.sub){mid=node(438.7,64.5,169.5,112,'细分网格','geo','<div class="rw text-end">网格</div><div class="rw">网格</div><div class="fld d-flex justify-content-between"><span>级别</span><span>1</span></div>');
  w=wire(`M${L(270.3)} ${y0}C${L(322)} ${y0} ${L(387)} ${y0+29} ${L(438.7)} ${y0+29}`)+wire(`M${L(608)} ${y0}H${L(776)}`)}
 else w=wire(`M${L(270.3)} ${y0}H${L(776)}`);
 const socks=sock(270.3,y0,G)+sock(270.3,y0+25.3,'g')+sock(776,y0,G)+sock(776,y0+25.3,'g')+(o.sub?sock(438.7,y0+29,G)+sock(438.7,y0+54.3,'#5a8f5f')+sock(607.8,y0,G):'');
 return `<div class="d-flex flex-column" style="width:${o.w}px"><div class="fname">${o.file}</div>
 <div class="shot" style="padding-top:${o.dy}px">
 ${strip(top1,'bar')}${strip(top2,'bar bar2')}
 <div class="view d-flex align-items-start overflow-hidden" style="padding-left:${X(32.3)}px">
 ${monkey(X(420),o.sub)}
 <div class="tools d-flex flex-column">${tools.map(g=>'<div class="grp">'+g.map(([n,c])=>`<div class="cell ${c}">${ic(n,18.5)}</div>`).join('')+'</div>').join('')}</div>
 <div class="stats"><div>用户透视</div><div class="scene">(1) 场景集合 | 苏珊娜.001</div>${['物体','顶点','边','面','三角形'].map((a,i)=>`<div><span class="lab">${a}</span>${o.st[i]}</div>`).join('')}</div>
 ${rnd(82.5,247,'panel',12)}${axis}${rnd(1029,155.7,'zoom')}${rnd(1029,179.7,'hand')}${rnd(1029,203.3,'cam')}${rnd(1029,227.3,'persp')}${rnd(1029,280,'plus')}${rnd(1029,304,'frame',12)}
 ${o.sub?'':`<span class="over tab lh-1" style="top:9px">${ic('left',6)}</span>`}
 </div>
 <div class="ned" style="margin-left:4px"><div style="margin-left:-4px">${strip(nodeTop,'bar nbar')}${strip(crumbs,'bar crumb')}</div>
 <div class="free">${nin}${mid}${nout}<svg class="over" style="left:0;top:0" width="1020" height="317">${w}${socks}</svg>${o.sub?'':`<span class="over tab lh-1" style="top:-26px">${ic('left',6)}</span>`}</div></div>
 </div>
 <div class="note d-flex align-items-center" style="margin-left:${o.nx}px"><span>${o.note}</span></div></div>`;
}
document.getElementById('board').innerHTML=
 shot({w:1026,k:1,dx:0,dy:0,sub:0,file:'Pasted image 20240816210825.png',st:['1','507','1,005','500','968'],note:'未细分的网格',nx:387.5})+
 shot({w:1028.5,k:1.0035,dx:.7,dy:2.5,sub:1,file:'Pasted image 20240816210854.png',st:['1','2,012','3,978','1,968','3,936'],note:'细分级别1的网格',nx:389});
</script>
</body>
</html>
